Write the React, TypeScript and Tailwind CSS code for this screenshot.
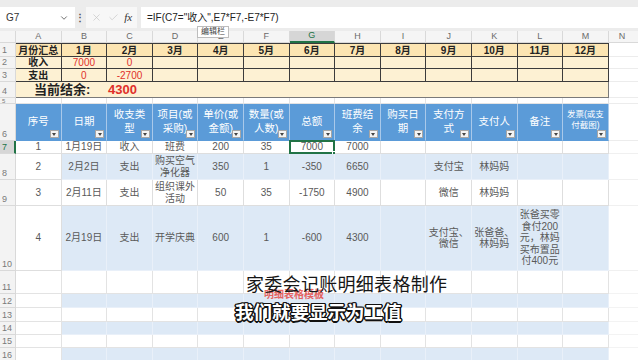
import { X, Check, ChevronDown } from "lucide-react";

const letters = ["A", "B", "C", "D", "E", "F", "G", "H", "I", "J", "K", "L", "M"];
const months = ["1月", "2月", "3月", "4月", "5月", "6月", "7月", "8月", "9月", "10月", "11月", "12月"];

const headers = [
  "序号",
  "日期",
  "收支类\n型",
  "项目(或\n采购)",
  "单价(或\n金额)",
  "数量(或\n人数)",
  "总额",
  "班费结\n余",
  "购买日\n期",
  "支付方\n式",
  "支付人",
  "备注",
  "发票(或支\n付截图)",
];

const dataRows = [
  { n: "7", h: "h-[13px]", band: false, cells: ["1", "1月19日", "收入", "班费", "200", "35", "7000", "7000", "", "", "", "", ""] },
  { n: "8", h: "h-[26px]", band: true, cells: ["2", "2月2日", "支出", "购买空气\n净化器", "350", "1", "-350", "6650", "", "支付宝", "林妈妈", "", ""] },
  { n: "9", h: "h-[26px]", band: false, cells: ["3", "2月11日", "支出", "组织课外\n活动", "50", "35", "-1750", "4900", "", "微信", "林妈妈", "", ""] },
  {
    n: "10",
    h: "h-[65px]",
    band: true,
    cells: ["4", "2月19日", "支出", "开学庆典", "600", "1", "-600", "4300", "", "支付宝、\n微信", "张爸爸、\n林妈妈", "张爸买零\n食付200\n元，林妈\n买布置品\n付400元", ""],
  },
];

const emptyRows = [
  { n: "11", h: "h-[23px]", band: false },
  { n: "12", h: "h-[14px]", band: true },
  { n: "13", h: "h-[14px]", band: false },
  { n: "14", h: "h-[13px]", band: true },
  { n: "15", h: "h-[13px]", band: false },
  { n: "16", h: "h-[14px]", band: true },
];

const RowHead = ({ n, active }: { n: string; active?: boolean }) => (
  <div
    className={
      active
        ? "w-[16px] shrink-0 flex items-end justify-start pl-[2px] text-[9px] leading-[11px] text-[#217346] bg-[#d6d6d6] border-r-2 border-[#217346] border-b border-b-[#d9d9d9]"
        : "w-[16px] shrink-0 flex items-end justify-start pl-[2px] text-[9px] leading-[11px] text-[#7a7a7a] bg-[#f3f3f3] border-r border-b border-[#d9d9d9]"
    }
  >
    {n}
  </div>
);

const FilterBtn = () => (
  <div className="absolute right-[2px] bottom-[2px] w-[9px] h-[8px] bg-[#f4f4f4] border border-[#a6a6a6] flex items-center justify-center">
    <div className="w-0 h-0 border-l-[2.5px] border-r-[2.5px] border-t-[3px] border-l-transparent border-r-transparent border-t-[#444]" />
  </div>
);

export default function App() {
  return (
    <div className="w-[638px] h-[360px] overflow-hidden relative bg-white font-['Liberation_Sans','Noto_Sans_CJK_SC',sans-serif] text-[#595959]">
      {/* formula bar */}
      <div className="h-[31px] bg-[#ececec] pt-[7px]">
        <div className="flex h-[21px] items-stretch">
          <div className="w-[75px] bg-white flex items-center justify-between px-[6px] text-[10px] text-[#333]">
            <span>G7</span>
            <ChevronDown size={10} strokeWidth={2} className="text-[#555]" />
          </div>
          <div className="w-[10px] flex items-center justify-center text-[10px] text-[#555] font-bold">⋮</div>
          <div className="w-[51px] bg-[#f7f7f7] flex items-center justify-around px-[2px] ml-[1px]">
            <X size={11} strokeWidth={1.5} className="text-[#c4c4c4]" />
            <Check size={11} strokeWidth={1.5} className="text-[#c4c4c4]" />
            <span className="text-[11px] italic font-['Liberation_Serif',serif] text-[#333]">fx</span>
          </div>
          <div className="flex-1 bg-white ml-[4px] flex items-center pl-[6px] text-[10px] text-[#222] font-['Liberation_Sans','Noto_Sans_CJK_SC',sans-serif]">
            =IF(C7="收入",E7*F7,-E7*F7)
          </div>
        </div>
      </div>

      {/* column header */}
      <div className="flex h-[12px] bg-[#f5f5f5]">
        <div className="w-[16px] shrink-0 border-r border-b border-[#d9d9d9] relative">
          <div className="absolute right-[1px] bottom-[1px] w-0 h-0 border-l-[6px] border-t-[6px] border-l-transparent border-t-transparent border-b-0 border-r-[0px] [border-bottom-color:#bdbdbd]" />
        </div>
        {letters.map((l) => (
          <div
            key={l}
            className={
              l === "G"
                ? "w-[45.6px] shrink-0 flex items-center justify-center text-[9px] text-[#217346] bg-[#d6d6d6] border-r border-[#d9d9d9] border-b-2 border-b-[#217346]"
                : "w-[45.6px] shrink-0 flex items-center justify-center text-[9px] text-[#6b6b6b] border-r border-b border-[#d9d9d9]"
            }
          >
            {l}
          </div>
        ))}
        <div className="flex-1 flex items-center pl-[10px] text-[9px] text-[#6b6b6b] border-b border-[#d9d9d9]">N</div>
      </div>

      {/* row 1 */}
      <div className="flex h-[14px]">
        <RowHead n="1" />
        <div className="w-[45.6px] shrink-0 flex items-center justify-center text-[10px] font-bold text-[#222] bg-[#fce5b2] border-r border-b border-t border-[#3c3c3c]">
          月份汇总
        </div>
        {months.map((m) => (
          <div
            key={m}
            className="w-[45.6px] shrink-0 flex items-center justify-center text-[10px] font-bold text-[#222] bg-[#fce5b2] border-r border-b border-t border-[#3c3c3c]"
          >
            {m}
          </div>
        ))}
        <div className="flex-1 border-b border-[#ececec]" />
      </div>

      {/* rows 2-3 */}
      {[
        { n: "2", h: "h-[12px]", label: "收入", vals: ["7000", "0"] },
        { n: "3", h: "h-[13px]", label: "支出", vals: ["0", "-2700"] },
      ].map((r) => (
        <div key={r.n} className={`flex ${r.h}`}>
          <RowHead n={r.n} />
          <div className="w-[45.6px] shrink-0 flex items-center justify-center text-[10px] font-bold text-[#222] bg-[#fdf1d3] border-r border-b border-[#3c3c3c]">
            {r.label}
          </div>
          {months.map((m, i) => (
            <div
              key={m}
              className="w-[45.6px] shrink-0 flex items-center justify-center text-[10px] text-[#e0302a] bg-[#fdf1d3] border-r border-b border-[#3c3c3c]"
            >
              {r.vals[i] ?? ""}
            </div>
          ))}
          <div className="flex-1 border-b border-[#ececec]" />
        </div>
      ))}

      {/* row 4 */}
      <div className="flex h-[16px]">
        <RowHead n="4" />
        <div className="w-[592.8px] shrink-0 flex items-center pl-[18px] bg-[#fdf1d3] border-r border-b border-[#7a7a7a]">
          <span className="w-[74px] text-[13px] font-bold text-[#222]">当前结余:</span>
          <span className="text-[13px] font-bold text-[#e0302a]">4300</span>
        </div>
        <div className="flex-1 border-b border-[#ececec]" />
      </div>

      {/* row 5 */}
      <div className="flex h-[6px]">
        <div className="w-[16px] shrink-0 bg-[#f3f3f3] border-r border-b border-[#d9d9d9] text-[6px] leading-[6px] pl-[2px] text-[#7a7a7a] overflow-hidden">5</div>
        {letters.map((l) => (
          <div key={l} className="w-[45.6px] shrink-0 border-r border-b border-[#e3e3e3]" />
        ))}
        <div className="flex-1 border-b border-[#ececec]" />
      </div>

      {/* row 6 header */}
      <div className="flex h-[37px]">
        <RowHead n="6" />
        {headers.map((h, i) => (
          <div
            key={h}
            className="w-[45.6px] shrink-0 relative flex items-center justify-center text-center whitespace-pre-line bg-[#5b9bd8] border-r border-[#a9c9ea] border-b border-b-[#5b9bd8] text-white"
          >
            <span className={i === 12 ? "text-[8.5px] leading-[11px] -mt-[4px]" : "text-[10.5px] leading-[14px] -mt-[2px]"}>{h}</span>
            <FilterBtn />
          </div>
        ))}
        <div className="flex-1 border-b border-[#ececec]" />
      </div>

      {/* data rows */}
      {dataRows.map((r) => (
        <div key={r.n} className={`flex ${r.h}`}>
          <RowHead n={r.n} active={r.n === "7"} />
          {r.cells.map((c, i) => (
            <div
              key={i}
              className={
                (r.band && i > 0 ? "bg-[#dde9f6] border-[#e9f0f9] " : "bg-white border-[#dedede] ") +
                "w-[45.6px] shrink-0 relative flex items-center justify-center text-center whitespace-pre-line text-[10px] leading-[11.5px] border-r border-b"
              }
            >
              {c}
              {r.n === "7" && i === 6 && (
                <div className="absolute -left-[1px] -top-[1px] -right-[1px] -bottom-[1px] border-2 border-[#217346]">
                  <div className="absolute -right-[3px] -bottom-[3px] w-[4px] h-[4px] bg-[#217346] border border-white" />
                </div>
              )}
            </div>
          ))}
          <div className="flex-1 border-b border-[#f0f0f0]" />
        </div>
      ))}

      {/* empty rows */}
      {emptyRows.map((r) => (
        <div key={r.n} className={`flex ${r.h}`}>
          <RowHead n={r.n} />
          {letters.map((l, i) => (
            <div
              key={l}
              className={
                (r.band && i > 0 ? "bg-[#dde9f6] border-[#e9f0f9] " : "bg-white border-[#e3e3e3] ") + "w-[45.6px] shrink-0 border-r border-b"
              }
            />
          ))}
          <div className="flex-1 border-b border-[#f3f3f3]" />
        </div>
      ))}

      {/* tooltip */}
      <div className="absolute left-[197px] top-[26px] h-[12px] px-[3px] bg-white border border-[#bdbdbd] text-[8px] leading-[10px] text-[#444]">
        编辑栏
      </div>

      {/* video overlays */}
      <div className="absolute left-[264px] top-[289px] text-[10px] leading-[11px] font-bold text-[#e8413b] opacity-80">明细表格模板</div>
      <div className="absolute left-[246px] top-[271px] text-[18px] leading-[24px] text-[#161616] tracking-[0.3px] font-['Noto_Sans_CJK_SC',sans-serif]">
        家委会记账明细表格制作
      </div>
      <div className="absolute left-[235px] top-[298px] text-[18.5px] leading-[26px] font-bold text-white font-['Noto_Sans_CJK_SC',sans-serif] [text-shadow:1.5px_0_0_#111,-1.5px_0_0_#111,0_1.5px_0_#111,0_-1.5px_0_#111,1px_1px_0_#111,-1px_-1px_0_#111,1px_-1px_0_#111,-1px_1px_0_#111]">
        我们就要显示为工值
      </div>
    </div>
  );
}
